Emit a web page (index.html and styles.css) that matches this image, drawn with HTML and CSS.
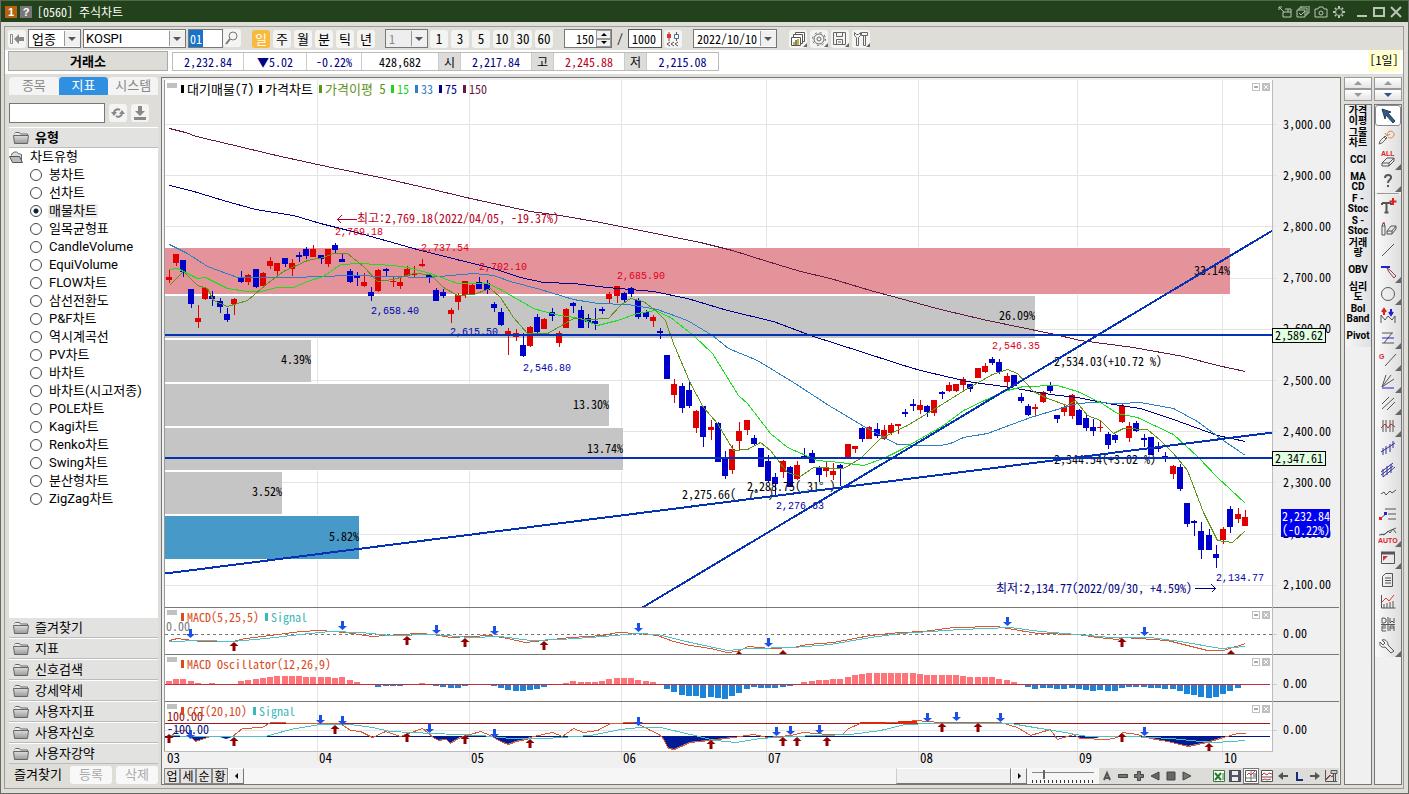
FILE: index.html
```html
<!DOCTYPE html>
<html lang="ko">
<head>
<meta charset="utf-8">
<title>[0560] 주식차트</title>
<link rel="stylesheet" href="styles.css">
</head>
<body>
<div class="window">
  <header class="titlebar">
    <span class="badge badge-num">1</span><span class="badge badge-help">?</span>
    <h1 class="title">[0560] 주식차트</h1>
    <div class="win-tools">
      <button aria-label="분리"><svg width="14" height="12" viewBox="0 0 14 12"><path d="M1 1l5 5M1 4V1h3M5 6v5h8V3H7M5 6h8M10 3v3"/></svg></button>
      <button aria-label="복사"><svg width="14" height="12" viewBox="0 0 14 12"><path d="M1 4h8v7H1zM3 4V2h8v7H9M5 2V0h8v7h-2M3 7l2 2 4-4"/></svg></button>
      <button aria-label="캡처"><svg width="14" height="12" viewBox="0 0 14 12"><path d="M1 3h3l1-2h4l1 2h3v8H1z"/><circle cx="7" cy="7" r="2"/></svg></button>
      <button aria-label="설정"><svg width="14" height="12" viewBox="0 0 14 12"><circle cx="7" cy="6" r="3.5"/><path stroke-width="2" d="M7 0v2M7 10v2M1 6h2M11 6h2M3 2l1 1M10 9l1 1M3 10l1-1M10 3l1-1"/></svg></button>
      <button aria-label="최소화" class="ctl"><svg width="12" height="12" viewBox="0 0 12 12"><path stroke-width="2" d="M1 10h10"/></svg></button>
      <button aria-label="최대화"><svg width="14" height="12" viewBox="0 0 14 12"><path stroke-width="2" d="M2 2h10v8H2z"/></svg></button>
      <button aria-label="닫기"><svg width="12" height="12" viewBox="0 0 12 12"><path stroke-width="2" d="M1 1l10 10M11 1L1 11"/></svg></button>
    </div>
  </header>

  <div class="frame">
    <div class="toolbar">
      <button class="tb" aria-label="처음"><svg width="16" height="12" viewBox="0 0 16 12"><path d="M1.500 1.500h2v9h-2z" fill="#fff" stroke="#888"/><path d="M5 6l5-5v3h5v4h-5v3z" fill="#888"/></svg></button>
      <span class="drop drop-kind"><select aria-label="구분"><option>업종</option></select></span>
      <span class="drop drop-name"><select aria-label="종목명"><option>KOSPI</option></select></span>
      <span class="code"><input aria-label="코드" value="01"><button class="tb" aria-label="검색"><svg width="14" height="14" viewBox="0 0 14 14" fill="none" stroke="#777"><circle cx="8" cy="5" r="4"/><path d="M5 8l-4 5" stroke-width="2"/></svg></button></span>
      <div class="group periods"><button class="tb on">일</button><button class="tb">주</button><button class="tb">월</button><button class="tb">분</button><button class="tb">틱</button><button class="tb">년</button></div>
      <span class="drop drop-min"><select aria-label="분 단위" disabled><option>1</option></select></span>
      <div class="group minutes"><button class="tb">1</button><button class="tb">3</button><button class="tb">5</button><button class="tb">10</button><button class="tb">30</button><button class="tb">60</button></div>
      <span class="spin"><input aria-label="표시 봉수" value="150"><span class="steps"><button aria-label="증가"><i class="up"></i></button><button aria-label="감소"><i class="down"></i></button></span></span>
      <span class="slash">/</span>
      <input class="total" aria-label="전체 봉수" value="1000">
      <button class="tb" aria-label="봉 추가"><svg width="15" height="16" viewBox="0 0 15 16"><path d="M3 1v9M10.500 1v9" stroke="#a33"/><path d="M1 3h4v4H1z" fill="#d33"/><path d="M8.500 3.500h4v4h-4z" fill="#fff" stroke="#37a"/><path d="M4 11l-3 2 3 2M8 11l-3 2 3 2M12 11l-3 2 3 2" fill="none" stroke="#555"/></svg></button>
      <span class="drop drop-date"><select aria-label="날짜"><option>2022/10/10</option></select></span>
      <div class="group tools">
        <button class="tb more" aria-label="차트 복사"><svg width="16" height="16" viewBox="0 0 16 16" fill="#fff" stroke="#555"><path d="M5.500 1.500h9v9h-9z"/><path d="M3.500 3.500h9v9h-9z"/><path d="M1.500 6.500h9v8h-9z"/><path d="M4 14v-3M8 14V8" stroke="#e7a51c" stroke-width="2"/><path d="M6 14V9" stroke="#39c" stroke-width="2"/></svg></button>
        <button class="tb more" aria-label="환경설정"><svg width="16" height="16" viewBox="0 0 16 16" fill="none" stroke="#666"><circle cx="8" cy="8" r="5"/><circle cx="8" cy="8" r="2"/><circle cx="8" cy="8" r="6.500" stroke-dasharray="2 3.100"/></svg></button>
        <button class="tb more" aria-label="저장"><svg width="16" height="16" viewBox="0 0 16 16" fill="none" stroke="#666"><path d="M1.500 1.500h12v12h-12zM4.500 1.500v4h6v-4M4.500 13.500v-5h6v5M6 11h3"/></svg></button>
        <button class="tb more" aria-label="도구"><svg width="16" height="16" viewBox="0 0 16 16" fill="none" stroke="#666"><path d="M1.500 1.500v3l2 2v8h2v-8l2-2v-3l-2 2h-2zM8.500 1.500h6v3h-6zM10.500 4.500h2v10h-2z"/></svg></button>
      </div>
    </div>

    <div class="quote">
      <button class="market">거래소</button>
      <dl class="cells">
        <dd class="w70 dn">2,232.84</dd><dd class="w62 dn">▼5.02</dd><dd class="w54 dn">-0.22%</dd><dd class="w76">428,682</dd>
        <dt>시</dt><dd class="w70 dn">2,217.84</dd><dt>고</dt><dd class="w70 rise">2,245.88</dd><dt>저</dt><dd class="w70 dn">2,215.08</dd>
      </dl>
      <span class="unit">[1일]</span>
    </div>

    <main class="main">
      <aside class="side">
        <div class="tabs"><button>종목</button><button class="active">지표</button><button>시스템</button></div>
        <div class="find"><input aria-label="지표 검색"><button class="tb" aria-label="새로고침"><svg width="14" height="14" viewBox="0 0 14 14" fill="none" stroke="#888" stroke-width="2"><path d="M3 6a4 4 0 0 1 6-2M11 8a4 4 0 0 1-6 2"/><path d="M0 6h6L3 10zM8 8h6l-3-4z" fill="#888" stroke="none"/></svg></button><button class="tb" aria-label="내려받기"><svg width="12" height="14" viewBox="0 0 12 14" fill="#888"><path d="M4 0h4v5h3L6 10 1 5h3zM0 11h12v3H0z"/></svg></button></div>
        <h2 class="fold head"><svg width="17" height="13"><use href="#folder"/></svg>유형</h2>
        <div class="tree">
          <p class="root"><svg width="15" height="13" viewBox="0 0 15 13"><path d="M2.500 4.500V3l3-2h2l2 1.500 3 1v6" fill="#ddd" stroke="#666"/><path d="M.5 5.500h10l3 6h-10z" fill="#bbb" stroke="#555"/></svg>차트유형</p>
          <ul id="types"></ul>
        </div>
        <nav class="folds">
          <button class="fold"><svg width="17" height="13"><use href="#folder"/></svg>즐겨찾기</button>
          <button class="fold"><svg width="17" height="13"><use href="#folder"/></svg>지표</button>
          <button class="fold"><svg width="17" height="13"><use href="#folder"/></svg>신호검색</button>
          <button class="fold"><svg width="17" height="13"><use href="#folder"/></svg>강세약세</button>
          <button class="fold"><svg width="17" height="13"><use href="#folder"/></svg>사용자지표</button>
          <button class="fold"><svg width="17" height="13"><use href="#folder"/></svg>사용자신호</button>
          <button class="fold"><svg width="17" height="13"><use href="#folder"/></svg>사용자강약</button>
        </nav>
        <div class="favs"><span>즐겨찾기</span><button disabled>등록</button><button disabled>삭제</button></div>
      </aside>

      <section class="chartbox">
        <svg id="chart" class="chart" viewBox="164 80 1175 688" preserveAspectRatio="xMinYMin meet" role="img" aria-label="KOSPI 일봉 차트"></svg>
        <div class="bottom">
          <div class="mini"><button>업</button><button>세</button><button>순</button><button>황</button></div>
          <button class="arrow" aria-label="왼쪽"><i class="left"></i></button>
          <div class="track"><div class="thumb"></div></div>
          <button class="arrow" aria-label="오른쪽"><i class="right"></i></button>
          <input class="zoom" type="range" aria-label="확대" min="0" max="16" value="3">
          <div class="play">
            <button aria-label="글자"><svg viewBox="0 0 16 16"><path d="M5 12l3-7 3 7M6 10h4" fill="none" stroke="#555" stroke-width="2"/></svg></button>
            <button aria-label="축소"><svg viewBox="0 0 16 16"><path d="M3.500 6.500h9v3h-9z" fill="#777" stroke="#444"/></svg></button>
            <button aria-label="확대"><svg viewBox="0 0 16 16"><path d="M6.500 3.500h3v3h3v3h-3v3h-3v-3h-3v-3h3z" fill="#777" stroke="#444"/></svg></button>
            <button aria-label="이전"><svg viewBox="0 0 16 16"><path d="M12 4v8L4 8z" fill="#666" stroke="#444"/></svg></button>
            <button aria-label="정지"><svg viewBox="0 0 16 16"><path d="M4 4h8v8H4z" fill="#666" stroke="#444"/></svg></button>
            <button aria-label="다음"><svg viewBox="0 0 16 16"><path d="M4 4v8l8-4z" fill="#777" stroke="#444"/></svg></button>
          </div>
          <div class="play outs">
            <button aria-label="엑셀"><svg viewBox="0 0 16 16"><path d="M2.500 2.500h11v11h-11z" fill="#fff" stroke="#397b3a"/><path d="M4 5l6 7M10 5l-6 7" stroke="#287a2c" stroke-width="2"/><path d="M12 5v7" stroke="#287a2c"/></svg></button>
            <button aria-label="저장"><svg viewBox="0 0 16 16"><path d="M2.500 2.500h11v11h-11z" fill="#556" stroke="#445"/><path d="M5 3h6v4H5zM5 9h6v4H5z" fill="#eee"/></svg></button>
            <button aria-label="분석" class="pressed"><svg viewBox="0 0 16 16"><path d="M2.500 2.500h11v11h-11z" fill="#fff" stroke="#555"/><path d="M8 3v10M3 10h10" stroke="#777"/><path d="M4 7l2-2 2 2 4-4" fill="none" stroke="#c33"/><path d="M10 6h3M10 8h3" stroke="#555"/></svg></button>
            <button aria-label="차트"><svg viewBox="0 0 16 16"><path d="M2.500 2.500h11v11h-11zM3 9h10" fill="#fff" stroke="#555"/><path d="M3 7l2-2 3 2 2-2 3 1M3 12l3-1 2 1 4-1" fill="none" stroke="#c33"/></svg></button>
            <button aria-label="뒤로"><svg viewBox="0 0 16 16"><path d="M3 8l5-4v3h5v2H8v3z" fill="#555"/></svg></button>
            <button aria-label="로그"><svg viewBox="0 0 16 16"><path d="M6 4v8h6" fill="none" stroke="#1b2c7c" stroke-width="2"/></svg></button>
            <button aria-label="앞으로"><svg viewBox="0 0 16 16"><path d="M13 8L8 4v3H3v2h5v3z" fill="#555"/></svg></button>
            <button aria-label="차트 도구"><svg viewBox="0 0 16 16" fill="none" stroke="#555"><path d="M2.500 2v11.500H14M3 11l4-4 2 2 2-3"/><path d="M3 12l5-5" stroke="#c33"/><path d="M8 2.500h6v3H8zM10.500 5.500h2v8h-2z" fill="#ccc"/></svg></button>
          </div>
        </div>
      </section>

      <div class="col col-a">
        <div class="pager"><button aria-label="위"><i class="up gray"></i></button><button aria-label="아래"><i class="down gray"></i></button></div>
        <div class="rail names">
          <button>가격<br>이평</button><button>그물<br>차트</button><button>CCI</button><button>MA<br>CD</button><button>F -<br>Stoc</button><button>S -<br>Stoc</button><button>거래<br>량</button><button>OBV</button><button>심리<br>도</button><button>Bol<br>Band</button><button>Pivot</button>
        </div>
      </div>
      <div class="col col-b">
        <div class="pager"><button aria-label="위"><i class="up gray"></i></button><button aria-label="아래"><i class="down navy"></i></button></div>
        <div class="rail draws">
          <button class="picked" aria-label="선택"><svg viewBox="0 0 20 20"><path d="M4 3l9 3-3 1 7 8-2 2-7-8-1 4z" fill="#345a86" stroke="#223c5c"/></svg></button>
          <button aria-label="되돌리기"><svg viewBox="0 0 20 20"><path d="M9 8c1-6 8-4 7 0-1 3-4 4-6 2M7 6l2 3 3-2" stroke="#e0823c"/><path d="M2 14l5-5 2 2-5 5-3 1zM6 10l2 2" stroke="#666"/></svg></button>
          <button class="more" aria-label="전체 삭제"><svg viewBox="0 0 20 20"><text x="3" y="7" class="tiny">ALL</text><path d="M4 14l5-5h7l-5 5zM4 14v3h7l5-5V9M11 14v3"/></svg></button>
          <button class="more" aria-label="도움말"><svg viewBox="0 0 20 20"><path d="M7 7c0-4 7-4 6 0-1 2-3 2-3 5M10 14v2" stroke="#555" stroke-width="2"/></svg></button>
          <hr>
          <button aria-label="문자"><svg viewBox="0 0 20 20"><path d="M4 7h9M8.500 7v10M4 7v2M13 7v2M6.500 16.500h4" stroke="#555" stroke-width="2"/><path d="M15 2v7M11.500 5.500h7" stroke="#d22" stroke-width="2"/></svg></button>
          <button aria-label="채우기"><svg viewBox="0 0 20 20"><path d="M4 8h3v9H4zM4 8l1-3h1l1 3M9 13l4-5h5l-4 5zM9 13v3h5l4-5V8M14 13v3"/><path d="M5 5h2" stroke="#d22"/></svg></button>
          <button aria-label="직선"><svg viewBox="0 0 20 20"><path d="M4 16L16 4"/></svg></button>
          <button class="more" aria-label="수평선"><svg viewBox="0 0 20 20"><path d="M3 5h9" stroke="#22c" stroke-width="2"/><path d="M9 6l2 4 5 6 2-2-6-6z" stroke="#844"/></svg></button>
          <button class="more" aria-label="원"><svg viewBox="0 0 20 20"><circle cx="10" cy="10" r="6.500"/></svg></button>
          <button aria-label="파동"><svg viewBox="0 0 20 20"><path d="M3 17V9l4 5 3-4 4 4 3-4v7"/><path d="M6 9V4M4 6l2-3 2 3" stroke="#d22" stroke-width="2"/><path d="M13 3v5M11 6l2 3 2-3" stroke="#22c" stroke-width="2"/></svg></button>
          <button class="more" aria-label="피보나치"><svg viewBox="0 0 20 20"><path d="M4 5h11M4 15h12M14 5L6 15"/><path d="M4 10h12" stroke="#22c"/></svg></button>
          <button class="more" aria-label="갠"><svg viewBox="0 0 20 20"><text x="1" y="9" class="tiny">G</text><path d="M7 16L18 4"/></svg></button>
          <button class="more" aria-label="부채꼴"><svg viewBox="0 0 20 20"><path d="M4 15L8 3M4 15l9-12M4 15l12-8"/><path d="M4 16h12" stroke="#22c"/></svg></button>
          <button class="more" aria-label="평행선"><svg viewBox="0 0 20 20"><path d="M4 10l7-7M4 15L16 4M9 16l8-8"/></svg></button>
          <button class="more" aria-label="사이클"><svg viewBox="0 0 20 20"><path d="M5 4v12M8 4v12M12 4v12M15 4v12"/><path d="M3 12l4-4 3 4 3-4 4 3" stroke="#a33"/></svg></button>
          <button aria-label="채널"><svg viewBox="0 0 20 20"><path d="M3 14L17 5M5 10v7M8 8v8M12 6v8M15 3v7" stroke="#339"/></svg></button>
          <button aria-label="이중 채널"><svg viewBox="0 0 20 20"><path d="M3 12L15 3M5 17L17 7M5 9v8M9 6v9M13 4v9M3 15l12-9" stroke="#339"/></svg></button>
          <button aria-label="지그재그"><svg viewBox="0 0 20 20"><path d="M3 12l3-2 2 3 4-4 2 2 4-3"/></svg></button>
          <button aria-label="구간"><svg viewBox="0 0 20 20"><path d="M7 5h11M10 10h8M10 15h8M3 14l5-4"/><path d="M1 13h3v3H1z" fill="#e22" stroke="none"/><path d="M6 8h3v3H6z" fill="#22d" stroke="none"/></svg></button>
          <button class="more" aria-label="자동"><svg viewBox="0 0 20 20"><path d="M1 9l6-1 4-3 7-3M3 8l3 1 4-4 2 2 3-4 3 4"/><text x="0" y="17" class="tiny">AUTO</text></svg></button>
          <button class="more" aria-label="창"><svg viewBox="0 0 20 20"><path d="M3.500 4.500h13v11h-13z"/><path d="M3 5h14" stroke-width="3"/><path d="M5 8h5l-5 5z" fill="#d33" stroke="none"/></svg></button>
          <button aria-label="문서"><svg viewBox="0 0 20 20"><path d="M7.500 3.500h7v13h-10v-10zM7 8h6M7 10.500h6M7 13h6"/></svg></button>
          <button aria-label="통계"><svg viewBox="0 0 20 20"><path d="M3.500 3v13h14M6 16v-4M9 16v-5M12 16v-6M15 16V9"/><path d="M4 10l4-4 3 3 5-6" stroke="#d33"/></svg></button>
          <button aria-label="주기"><svg viewBox="0 0 20 20"><path d="M4 4v5h2l2-1V5L6 4zM12 4v5l2-2 2 2V4M10 3v14M3 10.500h14M8 12H4v5h4M4 14h4M12 17v-5h4v5M12 14h4"/></svg></button>
          <button class="more" aria-label="설정"><svg viewBox="0 0 20 20"><path d="M4 4l3 3-2 2-3-3c-1 4 2 6 5 5l6 6 3-2-6-6c0-4-3-6-6-5z"/></svg></button>
        </div>
      </div>
    </main>
  </div>
</div>
<svg width="0" height="0" class="defs"><defs>
  <linearGradient id="fg" x1="0" y1="0" x2="0" y2="1"><stop offset="0" stop-color="#ddd"/><stop offset="1" stop-color="#999"/></linearGradient>
  <symbol id="folder" viewBox="0 0 17 13"><path d="M1.500 2.500l1-1h4l1 1.500h7v3" fill="#eee" stroke="#666"/><path d="M.5 4.500h15l-1 8h-13z" fill="url(#fg)" stroke="#666"/></symbol>
</defs></svg>
<script src="chart.js"></script>
</body>
</html>
```
FILE: styles.css
```css
:root {
  --ui: Roboto, "Noto Sans CJK KR", sans-serif;
  --mono: "Noto Sans Mono CJK KR", Roboto, "Noto Sans CJK KR", sans-serif;
}
* { box-sizing: border-box; }
body { margin: 0; font: 12px/16px var(--mono); color: #000; background: #deddd8; }
button, input, select { font: inherit; color: inherit; margin: 0; padding: 0; border-radius: 0; }
button { border: 0; background: none; display: flex; align-items: center; justify-content: center; }
h1, h2, p, ul, dl, dd, dt { margin: 0; padding: 0; font-weight: normal; font-size: inherit; list-style: none; }
i { display: block; width: 0; height: 0; border: 3px solid transparent; }
i.up { border-top: 0; border-bottom-color: #000; }
i.down { border-bottom: 0; border-top-color: #000; }
i.left { border-left: 0; border-right-color: #000; }
i.right { border-right: 0; border-left-color: #000; }
i.gray, i.navy { border-width: 4px; }
i.up.gray { border-top: 0; border-bottom-color: #999; }
i.down.gray { border-bottom: 0; border-top-color: #999; }
i.down.navy { border-bottom: 0; border-top-color: #335088; }

.window { min-height: 100vh; display: flex; flex-direction: column; border: 1px solid #666b62; border-top-color: #4b6a46; }
.defs { position: absolute; }
.titlebar { height: 21px; flex: none; background: #23421c; display: flex; align-items: center; padding: 0 6px 0 4px; color: #fff; }
.badge { width: 12px; height: 12px; margin-right: 3px; background: #b86210; font: bold 11px/12px "Liberation Sans", sans-serif; text-align: center; }
.badge-help { background: #777; }
.title { margin-left: 2px; }
.win-tools { margin-left: auto; display: flex; gap: 4px; }
.win-tools svg { fill: none; stroke: #b9c6b5; }
.ctl { margin-left: 6px; }

.frame { flex: 1; margin: 4px 4px 4px 3px; border: 1px solid #9d9b98; display: flex; flex-direction: column; min-height: 0; }
.toolbar { height: 23px; flex: none; display: flex; align-items: center; padding: 0 3px; }
.tb { height: 18px; width: 18px; flex: none; border-radius: 3px; background: #f4f4f2; position: relative; font-size: 13px; }
.tb.on { background: #f9b93a; color: #fff; }
.more::after { content: ""; position: absolute; right: 0; bottom: 1px; border: 2px solid #666; border-top-color: transparent; border-left-color: transparent; }
.group { display: flex; gap: 3px; }
.drop { position: relative; display: flex; height: 19px; background: #fff; border: 1px solid #777; }
.drop select { appearance: none; width: 100%; border: 0; background: none; padding: 0 3px; }
.drop::after { content: ""; position: absolute; right: 4px; top: 7px; border: 4px solid transparent; border-bottom: 0; border-top-color: #555; pointer-events: none; }
.drop::before { content: ""; position: absolute; right: 0; top: 1px; bottom: 1px; width: 15px; background: #f0f0f0; border-left: 1px solid #999; pointer-events: none; }
.drop-kind { width: 53px; margin-left: 2px; font-size: 13px; }
.drop-name { width: 103px; margin-left: 2px; font: 13px var(--ui); }
.drop-name select { padding: 0 2px; }
.drop-min { width: 43px; margin-left: 10px; background: #eee; color: #888; }
.drop-min select { opacity: 1; color: #888; }
.drop-date { width: 84px; margin-left: 11px; }
.code { display: flex; margin-left: 2px; }
.code input { width: 35px; height: 19px; border: 1px solid #777; background: linear-gradient(90deg, #1673c9 14px, #fff 14px); color: #fff; padding: 0 1px; }
.periods { margin-left: 11px; }
.minutes { margin-left: 2px; }
.spin { display: flex; width: 48px; height: 19px; margin-left: 11px; border: 1px solid #777; background: #fff; }
.spin input { flex: 1; min-width: 0; border: 0; text-align: right; padding-right: 2px; }
.steps { display: flex; flex-direction: column; width: 15px; }
.steps button { flex: 1; border: 1px solid #999; background: #f0f0f0; }
.slash { width: 16px; text-align: center; }
.total { width: 34px; height: 19px; margin-right: 2px; border: 1px solid #555; padding: 0 3px; }
.tools { margin-left: 12px; }

.quote { height: 25px; flex: none; display: flex; align-items: center; background: #fff; padding: 0 3px 2px; border-bottom: 1px solid #deddd8; }
.market { width: 160px; height: 20px; background: #dddcd7; border: 1px solid #aaa; font-weight: bold; font-size: 13px; }
.cells { display: flex; margin-left: 4px; height: 19px; border: 1px solid #bbb; }
.cells dd, .cells dt { line-height: 17px; text-align: center; border-right: 1px solid #ccc; }
.cells dd:last-child { border-right: 0; }
.cells dt { width: 22px; background: #dcdcda; }
.w54 { width: 55px; } .w62 { width: 63px; } .w70 { width: 71px; } .w76 { width: 77px; }
.dn { color: #000084; } .rise { color: #b8001c; }
.unit { margin-left: auto; align-self: stretch; width: 32px; background: #ffffd0; text-align: center; line-height: 20px; }

.main { flex: 1; display: flex; padding: 2px 1px 3px 4px; min-height: 0; }
.side { width: 149px; flex: none; display: flex; flex-direction: column; font: 13px/16px var(--ui); }
.tabs { display: flex; height: 18px; color: #888; }
.tabs button { flex: 1; background: #f4f4f4; border-radius: 4px 4px 0 0; }
.tabs .active { background: #2f8fe0; color: #fff; }
.find { display: flex; gap: 4px; margin: 8px 0 4px; align-items: center; }
.find input { width: 96px; height: 20px; border: 1px solid #777; background: #fff; }
.fold { display: flex; align-items: center; justify-content: flex-start; width: 100%; height: 21px; gap: 5px; padding: 0 4px; background: #e2e2e1; border-top: 1px solid #fff; border-bottom: 1px solid #bbb; }
.head { font-weight: bold; }
.tree { flex: 1; background: #fff; }
.root { display: flex; align-items: center; gap: 6px; height: 18px; }
.tree label { display: flex; align-items: center; height: 18px; padding-left: 21px; gap: 6px; }
.tree label span { padding: 0 1px; line-height: 14px; }
.tree input { appearance: none; width: 12px; height: 12px; margin: 0; border: 1px solid #444; border-radius: 50%; background: #fff; }
.tree input:checked { background: radial-gradient(circle, #123 2px, #fff 3px); }
.tree input:checked + span { background: #ededed; }
.favs { display: flex; height: 21px; align-items: center; gap: 4px; padding-left: 5px; }
.favs span { width: 52px; }
.favs button { flex: 1; height: 18px; border-radius: 3px; background: #f8f8f8; color: #aaa; }

.chartbox { flex: 1; min-width: 0; margin: 0 3px; border: 1px solid #777; background: #f0f0f0; display: flex; flex-direction: column; padding: 2px 1px 0 2px; }
.chart { flex: 1; min-height: 0; width: 100%; display: block; font: 12px var(--mono); }
.chart .ko { font-size: 13px; }
.chart .mark { font: 10px "Liberation Mono", monospace; }
.bottom { height: 16px; flex: none; display: flex; background: #f6f6f6; }
.mini { display: flex; }
.mini button, .arrow { width: 16px; border: 1px solid #888; background: #e4e4e2; line-height: 12px; }
.arrow { border-color: #fff #777 #777 #fff; background: #f0f0f0; }
.track { flex: 1; display: flex; justify-content: flex-end; padding: 0; }
.thumb { width: 115px; border: 1px solid; border-color: #fff #777 #777 #ccc; background: #f0f0f0; }
.zoom { appearance: none; width: 62px; height: 16px; margin: 0 5px; background: linear-gradient(#888, #888) 0 4px / 100% 1px no-repeat, repeating-linear-gradient(90deg, #333 0 1px, transparent 1px 4px) 0 12px / 100% 3px no-repeat; }
.zoom::-webkit-slider-thumb { appearance: none; width: 2px; height: 9px; margin-top: -4px; background: #666; }
.play { display: flex; background: #dcdcd9; padding: 0 4px 0 0; }
.play button { width: 16px; height: 16px; }
.play svg { width: 16px; height: 16px; }
.outs { padding: 0 0 0 12px; }
.play .pressed { background: #fff; outline: 1px solid #777; outline-offset: -1px; }

.col { width: 28px; flex: none; display: flex; flex-direction: column; gap: 3px; margin-right: 2px; }
.col-b { margin-right: 0; }
.pager { display: flex; flex-direction: column; height: 24px; }
.pager button { flex: 1; border: 1px solid #999; background: linear-gradient(#fff, #e4e4e4); }
.rail { flex: 1; border: 1px solid #777; background: #f0f0f0; display: flex; flex-direction: column; }
.rail button { flex: none; height: 22px; position: relative; }
.names button { background: linear-gradient(90deg, #f6f6f6, #dfe0e2); font: bold 10px/10px Roboto, "Noto Sans CJK KR", sans-serif; }
.draws button { background: linear-gradient(90deg, #fafafa, #dedee0); }
.draws .picked { height: 21px; border: 1px solid #889; border-radius: 3px; background: #fff; }
.draws hr { width: 22px; margin: 1px auto; border: 0; border-top: 1px solid #999; }
.draws svg { width: 20px; height: 20px; fill: none; stroke: #555; }
.draws .tiny { font: bold 7px "Liberation Sans", sans-serif; fill: #d22; stroke: none; }
.draws .more::after { border-width: 3px; right: 0; bottom: 0; }
```
FILE: chart.js
```js
const types = ['봉차트', '선차트', '매물차트', '일목균형표', 'CandleVolume', 'EquiVolume', 'FLOW차트', '삼선전환도', 'P&F차트', '역시계곡선', 'PV차트', '바차트', '바차트(시고저종)', 'POLE차트', 'Kagi차트', 'Renko차트', 'Swing차트', '분산형차트', 'ZigZag차트'];
types.forEach((name, i) => {
  const li = document.createElement('li');
  const label = document.createElement('label');
  const radio = document.createElement('input');
  radio.type = 'radio';
  radio.name = 'type';
  radio.checked = i === 2;
  const span = document.createElement('span');
  span.textContent = name;
  label.append(radio, span);
  li.append(label);
  document.getElementById('types').append(li);
});

// Daily candles: colour, high, body top, body bottom, low (chart units).
const candles = `r269,277,280,283 r254,254,263,266 b260,260,272,277 b289,289,304,308 r305,318,322,328 r287,288,299,300 b291,296,299,306 b298,301,307,313 b308,314,320,322 r298,299,304,315
b271,277,282,283 r274,275,282,285 b269,269,287,288 r272,273,286,286 r257,261,266,269 r263,263,271,275 b258,258,264,267 r259,263,269,276 b252,255,257,262 b247,249,256,259
r245,249,257,257 b255,255,259,264 r249,249,264,267 b243,245,250,253 b254,259,262,262 b269,271,282,283 b272,275,278,286 r273,282,286,287 b287,292,296,301 r269,270,291,292
b268,269,271,276 r277,281,282,287 r278,282,286,289 r266,269,276,276 r266,274,275,278 r259,264,266,267 b274,275,277,283 b288,290,301,301 b289,292,296,298 r308,310,314,323
r293,295,302,310 r281,281,295,298 r284,285,294,295 b277,282,289,289 b280,283,290,294 b302,304,308,312 b308,312,325,326 r328,331,334,355 r329,333,337,341 b333,345,356,357
r326,327,346,347 b314,317,332,334 r318,319,329,329 b308,312,316,321 r331,333,343,347 r308,309,328,328 b302,303,306,313 b306,310,328,328 b314,318,322,328 b308,321,324,330
b307,309,311,314 r292,294,299,303 r286,286,296,303 b292,293,300,302 b287,288,294,297 b298,300,317,319 b310,312,317,319 r315,317,321,327 b328,331,333,339 b355,355,379,379
r379,384,395,403 b383,386,408,413 b381,390,406,408 r410,411,428,433 b406,406,437,447 r420,427,430,440 b422,423,462,462 b451,457,476,479 r445,449,470,474 r422,431,441,450
r420,420,430,435 b435,438,444,445 b448,448,467,467 b455,461,481,483 b473,477,484,495 r460,461,472,478 b466,467,487,487 r461,465,479,480 b448,456,457,458 b450,453,463,463
b466,468,475,482 r462,467,471,477 r463,471,475,480 b464,465,468,486 r444,444,457,458 r446,446,449,453 b427,428,439,442 r426,427,439,439 b423,429,436,438 r425,430,439,440
r423,425,433,435 r424,424,426,434 b409,412,414,417 b399,404,406,411 r400,405,410,414 b405,406,412,417 r400,400,413,416 b391,392,394,399 r382,385,391,392 r384,384,391,392
r377,379,385,390 b384,384,389,392 r368,368,378,378 r363,366,372,373 b357,359,363,365 b359,362,372,374 r373,376,382,387 b375,375,386,386 b393,397,401,403 b404,406,415,416
r404,407,409,417 r391,392,402,403 b382,386,391,393 b415,415,419,423 r405,407,412,416 r394,395,416,419 b409,410,425,425 b415,418,428,431 b419,427,431,436 r420,427,428,432
b432,434,445,449 b434,435,440,443 r404,406,422,423 r422,426,438,442 b421,423,431,432 b434,438,440,447 b437,437,455,455 b442,446,449,452 b452,456,459,462 r465,466,474,479
b464,467,489,491 b503,503,524,527 b520,521,523,536 b522,531,550,559 b529,535,550,550 b545,554,558,568 r527,529,540,544 b506,509,527,533 r508,514,519,523 r510,517,526,526`
  .split(/\s+/).map(s => [s[0], ...s.slice(1).split(',').map(Number)]);

const averages = {
  '#631a46': '169,128 185,132 196,136 230,144 276,155 317,164 336,168 380,177 428,188 470,198 530,211 560,215 600,222 650,232 700,242 732,250 767,261 800,271 830,278 870,290 907,300 940,309 987,320 1050,333 1080,340 1133,347 1183,356 1217,365 1245,371',
  '#00008c': '169,185 190,190 223,200 255,209 293,215 320,223 360,233 413,248 460,260 493,268 520,277 543,282 573,283 607,287 653,291 687,298 727,310 773,321 813,336 860,351 900,364 920,370 967,381 1010,387 1050,394 1077,397 1113,404 1140,408 1173,419 1217,435 1245,441',
  '#2d80c4': '169,244 187,253 207,266 237,277 293,277 320,276 350,275 427,277 473,273 493,275 510,281 540,289 573,299 597,303 627,304 657,309 687,320 712,335 728,348 757,360 793,382 830,406 867,428 897,444 920,445 940,445 950,443 963,437 987,433 1003,427 1030,417 1060,408 1077,403 1093,402 1120,403 1140,402 1173,408 1197,421 1220,438 1245,455',
  '#18e01c': '169,269 177,268 197,278 205,277 227,288 247,291 260,291 277,287 293,287 307,281 323,276 340,264 360,263 393,265 407,267 430,273 457,283 487,283 500,289 533,308 543,311 560,315 580,318 597,325 617,320 637,313 655,310 670,317 693,335 712,353 738,395 747,403 770,433 787,447 817,460 840,462 863,465 883,458 903,448 943,425 963,410 1003,391 1023,386 1057,385 1077,391 1100,402 1117,413 1137,417 1173,434 1197,456 1217,477 1230,489 1245,503',
  '#5e9418': '169,285 183,271 197,285 207,288 213,300 227,306 247,300 267,283 283,271 307,260 323,257 333,253 347,253 363,266 377,281 393,279 413,273 430,274 443,287 457,295 473,294 490,288 500,297 513,317 527,333 547,333 563,324 573,318 587,319 608,318 620,305 630,298 643,301 655,310 665,320 673,343 690,383 703,407 717,423 733,450 747,449 760,442 770,450 787,472 800,476 813,467 843,468 860,458 880,438 907,425 943,403 967,388 992,374 1007,369 1017,373 1033,391 1047,398 1067,405 1075,400 1087,415 1100,420 1113,433 1123,428 1147,429 1160,440 1173,453 1187,470 1203,512 1217,540 1232,542 1245,530'
};
const macd = '169,640 177,638 200,641 232,641 245,638 270,635 300,631 320,630 345,632 372,636 400,634 420,633 433,634 450,637 470,636 490,635 507,638 525,642 543,640 570,637 603,635 617,632 637,633 657,635 673,641 690,645 710,648 727,652 737,651 748,646 770,648 793,647 807,644 833,642 870,635 900,632 923,631 953,627 997,626 1013,629 1037,633 1077,634 1097,637 1117,639 1123,637 1167,640 1187,645 1207,650 1223,650 1245,643';
const macdSignal = '169,641 200,640 232,641 265,638 300,634 330,631 360,632 390,635 433,634 470,637 500,636 530,640 560,639 603,636 637,633 657,634 690,642 727,650 748,648 793,647 830,644 870,637 900,633 960,629 1010,627 1040,631 1077,634 1110,637 1150,637 1180,641 1220,648 1245,646';
const cci = '169,738 175,731 185,730 190,736 195,741 210,736 232,736 242,728 262,727 270,722 300,723 340,723 350,730 360,731 372,737 385,731 400,736 422,728 433,737 438,740 446,739 450,743 460,737 480,731 490,735 500,741 508,744 516,741 526,739 533,736 552,732 562,736 573,728 583,732 597,730 610,723 635,722 650,730 657,733 662,737 668,748 674,749 690,742 710,740 733,737 753,734 767,737 790,735 803,732 827,734 842,734 848,728 860,723 900,722 915,720 940,722 1000,722 1017,727 1030,735 1050,729 1057,739 1073,734 1080,738 1107,739 1117,737 1122,732 1137,734 1150,738 1167,741 1188,746 1207,742 1223,737 1237,733 1245,733';
const cciSignal = '169,735 190,736 265,736 290,729 320,724 350,724 372,727 390,731 433,733 480,735 510,738 545,738 590,735 620,729 640,727 660,727 690,734 715,740 735,742 760,738 790,736 850,734 880,730 905,724 930,723 1010,723 1040,728 1070,733 1087,736 1130,736 1170,738 1200,741 1215,742 1245,740';
const histogram = [3,5,5,3,1,0,1,0,-1,0,3,4,5,6,7,8,8,8,8,7,7,7,7,6,7,4,2,0,-1,-3,-2,-2,-2,-1,0,1,0,-2,-3,-4,-4,-2,-1,-1,-1,-2,-4,-6,-7,-7,-6,-5,-3,-1,-1,1,3,2,2,2,3,5,6,6,6,4,3,2,0,-5,-8,-11,-12,-12,-14,-13,-14,-15,-12,-9,-5,-3,-4,-4,-4,-3,-2,-1,2,3,4,4,5,5,7,9,10,11,11,11,11,11,11,11,10,9,9,9,9,9,8,7,7,7,7,5,4,2,-1,-3,-5,-4,-4,-5,-5,-4,-5,-6,-7,-6,-7,-7,-4,-3,-3,-3,-4,-4,-5,-5,-7,-10,-11,-13,-14,-13,-10,-7,-4,-1];

const out = [];
const cx = i => Math.round(169 + i * 7.22);
const rect = (x, y, w, h, fill) => out.push(`<rect x="${x}" y="${y}" width="${w}" height="${h}" fill="${fill}" shape-rendering="crispEdges"/>`);
const poly = (points, color, w = 1) => out.push(`<polyline points="${points}" transform="translate(0.5 0.5)" fill="none" stroke="${color}" stroke-width="${w}" shape-rendering="crispEdges"/>`);
const text = (x, y, s, fill = '#000', cls = '', anchor = 'start') => out.push(`<text x="${x}" y="${y}" fill="${fill}" class="${cls}" text-anchor="${anchor}">${s}</text>`);
const months = [[165, '03'], [317, '04'], [469, '05'], [621, '06'], [766, '07'], [918, '08'], [1077, '09'], [1222, '10']];

rect(164, 80, 1108, 671, '#fff');
months.slice(1).forEach(([x]) => rect(x, 80, 1, 681, '#e4e4e4'));
for (let i = 0; i < 10; i++) {
  const y = Math.round(124 + i * 51.2);
  rect(164, y, 1113, 1, '#e4e4e4');
}
[634, 684, 730].forEach(y => rect(1272, y, 5, 1, '#ccc'));
rect(164, 730, 1108, 1, '#e4e4e4');

// Volume-by-price bands.
[[1230, 248, 46, '#e5939b'], [1035, 296, 42, '#c5c5c5'], [311, 340, 42, '#c5c5c5'], [609, 384, 42, '#c5c5c5'], [623, 428, 42, '#c5c5c5'], [282, 472, 42, '#c5c5c5'], [359, 516, 43, '#4799c7']]
  .forEach(([x, y, h, c]) => { rect(165, y - 1, x - 165, h + 2, '#fff'); rect(165, y, x - 165, h, c); });

candles.forEach(([c, hi, top, bot, lo], i) => {
  const x = cx(i), fill = c === 'r' ? '#e00000' : '#0000cc';
  rect(x, hi, 1, Math.max(1, lo - hi), fill);
  rect(x - 3, top, 6, Math.max(1, bot - top), fill);
});
Object.entries(averages).forEach(([c, p]) => poly(p, c));

[[1230, 275, '33.14%'], [1035, 320, '26.09%'], [311, 364, '4.39%'], [609, 409, '13.30%'], [623, 453, '13.74%'], [282, 496, '3.52%'], [359, 541, '5.82%']]
  .forEach(([x, y, s]) => text(x, y, s, '#000', '', 'end'));

// Highest / lowest markers and swing labels.
poly('341,215 337,219 341,223', '#b8001c');
rect(338, 219, 19, 1, '#b8001c');
text(357, 223, '최고:2,769.18(2022/04/05, -19.37%)', '#b8001c');
text(996, 593, '최저:2,134.77(2022/09/30, +4.59%)', '#000084');
rect(1195, 588, 20, 1, '#000084');
poly('1211,584 1215,588 1211,592', '#000084');
[[335, 235, '2,769.18'], [421, 251, '2,737.54'], [479, 270, '2,702.10'], [617, 279, '2,685.90'], [992, 349, '2,546.35']].forEach(a => text(...a, '#e00018', 'mark'));
[[371, 314, '2,658.40'], [450, 335, '2,615.50'], [523, 371, '2,546.80'], [776, 509, '2,276.63'], [1216, 581, '2,134.77']].forEach(a => text(...a, '#0000b0', 'mark'));
text(682, 499, '2,275.66(');
text(748, 499, '7°');
text(768, 499, ')');
text(747, 491, '2,288.75( 31° )');
text(1054, 366, '2,534.03(+10.72 %)');
text(1054, 464, '2,344.54(+3.02 %)');

rect(165, 334, 1107, 2, '#0532b4');
rect(165, 457, 1107, 2, '#0532b4');
poly('165,573 1272,432', '#0532b4', 2);
poly('642,607 1272,230', '#0532b4', 2);

const legend = (x, y, c, s, cls) => { rect(x, y - 9, 3, 8, c); text(x + 6, y, s, c, cls); };
const tab = y => rect(167, y, 10, 5, '#c0c0c0');
tab(83);
[[181, '#000', '대기매물(7)', 'ko'], [259, '#000', '가격차트', 'ko'], [319, '#5e9418', '가격이평 5', 'ko'], [391, '#18d81c', '15'], [415, '#2d80c4', '33'], [439, '#00008c', '75'], [463, '#631a46', '150']].forEach(([x, c, s, k]) => legend(x, 94, c, s, k));

// MACD.
tab(610);
for (let x = 165; x < 1270; x += 6) rect(x, 634, 3, 1, '#777');
poly(macd, '#dc5a32');
poly(macdSignal, '#4cc0c4');
text(166, 631, '0.00', '#777');
legend(181, 622, '#d84a20', 'MACD(5,25,5)');
legend(265, 622, '#3cb8b8', 'Signal');

// Oscillator.
tab(657);
histogram.forEach((v, i) => v && rect(cx(i) - 3, v > 0 ? 684 - v : 684, 6, Math.abs(v), v > 0 ? '#ff7478' : '#1b84d8'));
rect(165, 684, 1105, 1, '#c03038');
legend(181, 669, '#d84a20', 'MACD Oscillator(12,26,9)');

// CCI.
tab(704);
['190,737 195,741 201,740 209,737', '220,737 226,739 232,737', '432,737 438,740 446,739 450,743 460,737', '493,737 500,741 508,744 516,741 526,739 530,737', '662,737 668,748 674,749 690,742 710,740 733,737', '1078,737 1083,739 1097,738 1099,737', '1147,737 1165,741 1188,746 1207,742 1223,737']
  .forEach(p => out.push(`<polygon points="${p}" fill="#001c94"/>`));
rect(165, 723, 1105, 1, '#a01818');
rect(165, 736, 1105, 1, '#00148c');
poly(cci, '#dc5a32');
poly(cciSignal, '#4cc0c4');
rect(898, 721, 19, 3, '#e02808');
rect(860, 722, 26, 2, '#e02808');
text(167, 721, '100.00', '#901010');
text(167, 734, '-100.00', '#00107c');
legend(181, 716, '#d84a20', 'CCI(20,10)');
legend(253, 716, '#3cb8b8', 'Signal');

// Buy and sell arrows; the second value is the top edge.
const down = (x, y) => out.push(`<path d="M${x - 1} ${y}h3v5h3l-4.500 4-4.500-4h3z" fill="#1a50e8"/>`);
const up = (x, y, cut) => out.push(cut ? `<path d="M${x} ${y}l4 4h-8z" fill="#900000"/>` : `<path d="M${x} ${y}l4.500 4h-3v5h-3v-5h-3z" fill="#900000"/>`);
[[190, 629], [342, 621], [436, 625], [494, 626], [638, 623], [768, 638], [1007, 617], [1144, 627], [190, 730], [320, 715], [342, 716], [429, 724], [494, 729], [638, 717], [776, 727], [790, 726], [819, 725], [927, 713], [956, 712], [1000, 713], [1144, 727]].forEach(a => down(...a));
[[234, 642], [407, 636], [465, 638], [544, 641], [739, 651, 1], [783, 650, 1], [1122, 638], [1231, 650, 1], [169, 734], [234, 737], [335, 725], [407, 733], [465, 735], [530, 739], [711, 740], [783, 737], [797, 737], [827, 737], [942, 723], [978, 723], [1122, 733], [1209, 743]].forEach(a => up(...a));

// Panel frames, axes and panel buttons.
[607, 654, 701].forEach(y => rect(164, y, 1175, 1, '#777'));
rect(164, 79, 1, 672, '#999');
rect(1272, 80, 1, 672, '#bbb');
rect(164, 751, 1109, 1, '#bbb');
[84, 612, 659, 706].forEach(y => {
  rect(1252, y - 1, 8, 8, '#c0c0c0');
  rect(1253, y, 6, 6, '#fff');
  rect(1254, y + 2, 4, 2, '#aaa');
  rect(1262, y - 1, 8, 8, '#c0c0c0');
  out.push(`<path d="M1264 ${y + 1}l4 4m0-4l-4 4" stroke="#fff"/>`);
});
[3000, 2900, 2800, 2700, 2600, 2500, 2400, 2300, 2200, 2100].forEach((p, i) => text(1283, Math.round(129 + i * 51.1), p.toLocaleString('en-US') + '.00'));
[638, 688, 734].forEach(y => text(1283, y, '0.00'));
months.forEach(([x, s]) => text(x + 2, 763, s, '#000', 'ko'));
[[328, '2,589.62'], [451, '2,347.61']].forEach(([y, s]) => {
  rect(1272, y, 54, 15, '#000');
  rect(1273, y + 1, 52, 13, '#e2ffe2');
  text(1275, y + 12, s);
});
rect(1281, 509, 49, 28, '#0000f0');
text(1282, 521, '2,232.84', '#fff');
text(1282, 535, '(-0.22%)', '#fff');

document.getElementById('chart').innerHTML = out.join('');
```
